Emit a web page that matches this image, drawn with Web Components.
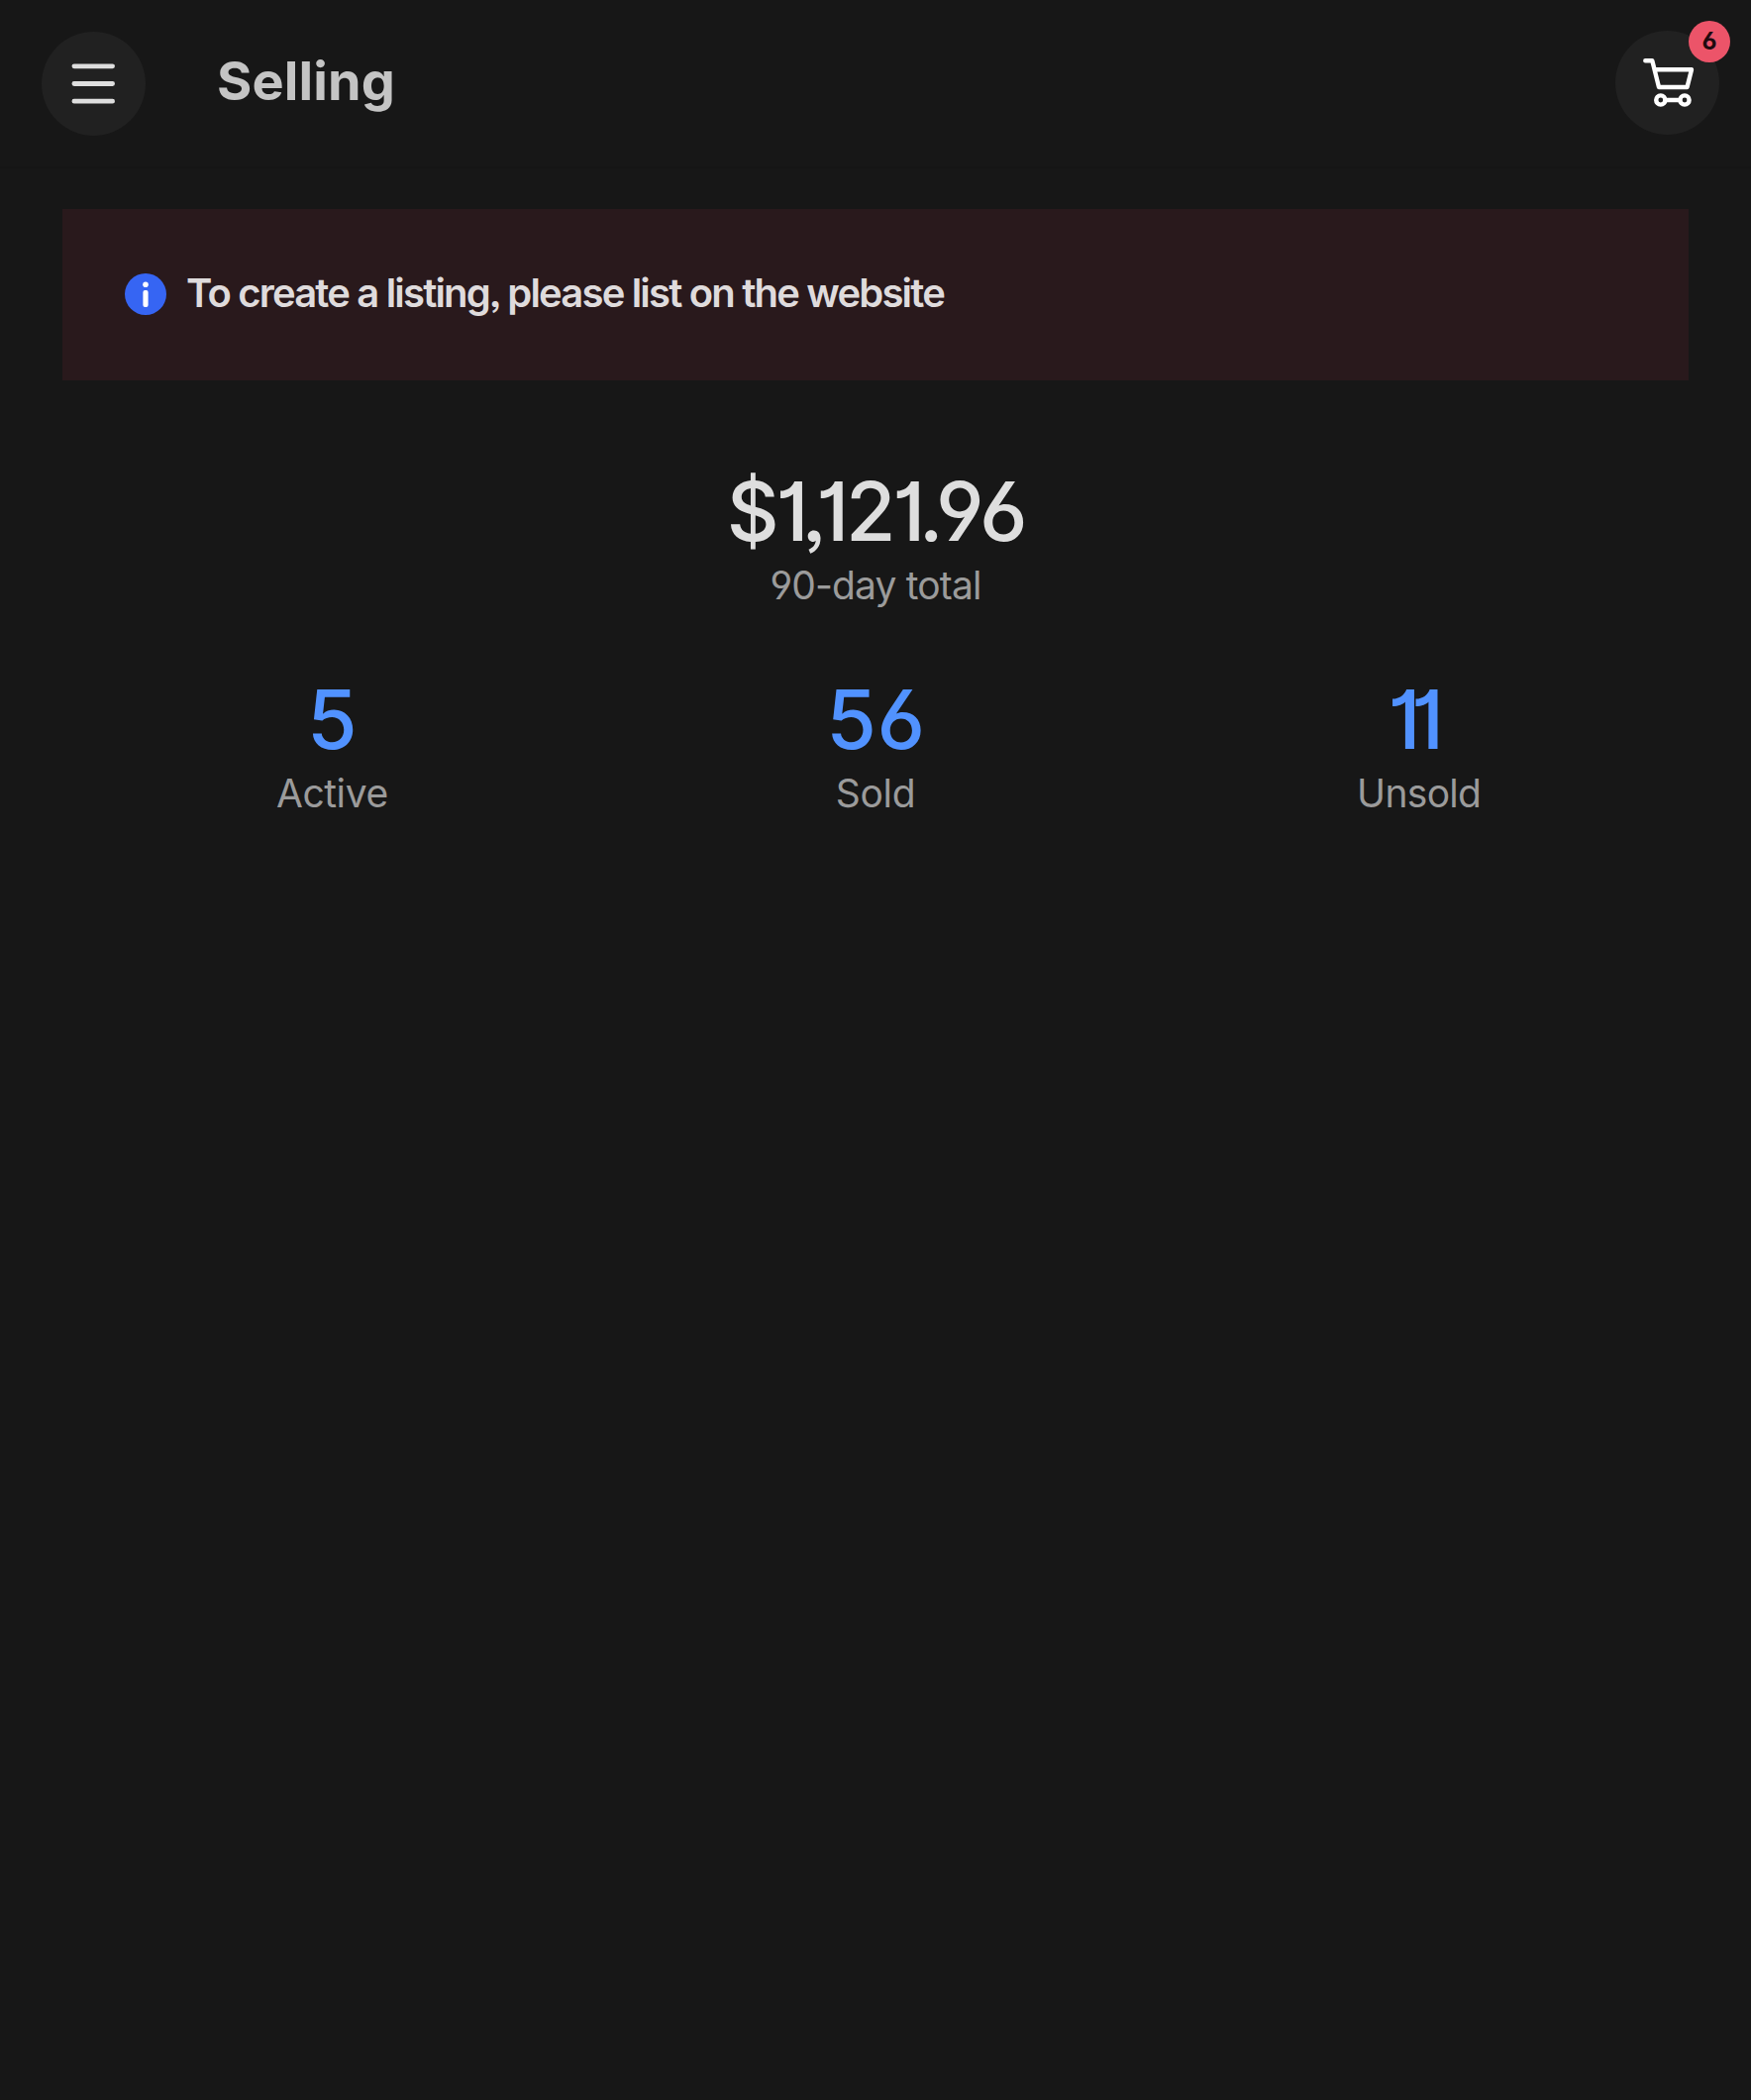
<!DOCTYPE html>
<html lang="en">
<head>
<meta charset="utf-8">
<title>Selling</title>
<style>
html,body{margin:0;background:#171717}
body{min-height:2120px;font-family:Inter,"Liberation Sans",sans-serif;font-feature-settings:"cv01","cv03","cv04","ss03";-webkit-font-smoothing:antialiased}
</style>
</head>
<body>
<selling-page></selling-page>
<script>
const define=(name,html)=>{
  const t=document.createElement('template');
  t.innerHTML=html;
  customElements.define(name,class extends HTMLElement{
    constructor(){super();this.attachShadow({mode:'open'}).append(t.content.cloneNode(true));}
  });
};

define('round-button',`
<style>
:host{display:block;position:relative;width:105px;height:105px;border-radius:50%;background:#212121}
</style><slot></slot><slot name="badge"></slot>`);

define('menu-icon',`
<style>:host,svg{display:block}</style>
<svg width="105" height="105" viewBox="0 0 105 105" fill="none" stroke="#dedede" stroke-width="4.8" stroke-linecap="round"><path d="M32.9 34.8H71.6M32.9 52.5H71.6M32.9 70.2H71.6"/></svg>`);

define('cart-icon',`
<style>:host,svg{display:block}</style>
<svg width="105" height="105" viewBox="0 0 105 105" fill="none" stroke="#fff" stroke-width="4.4" stroke-linecap="round" stroke-linejoin="round"><path d="M30.3 30.3H37.3L44 57H72.5L77 39.2H40.5"/><circle cx="45.8" cy="70" r="4.6"/><circle cx="70" cy="70" r="4.6"/><path d="M51 70H65"/></svg>`);

define('count-badge',`
<style>
:host{position:absolute;right:-11px;top:-10px;width:42px;height:42px;border-radius:50%;background:#ec5469;color:#200a0f;display:flex;align-items:center;justify-content:center;font-size:24.5px;line-height:42px;font-weight:700}
span{display:block;transform:translateY(-1px)}
</style><span><slot></slot></span>`);

define('app-header',`
<style>
:host{display:flex;align-items:flex-start;height:170px;box-sizing:border-box;padding:31px 32px 0 42px;border-bottom:2px solid #151515}
::slotted([slot=start]){margin-top:1px}
h1{margin:0 auto 0 72px;font-size:54px;line-height:101px;font-weight:700;letter-spacing:.1px;color:#c4c4c4;white-space:nowrap}
</style><slot name="start"></slot><h1><slot></slot></h1><slot name="end"></slot>`);

define('info-banner',`
<style>
:host{display:flex;align-items:center;gap:20px;box-sizing:border-box;height:173px;margin:41px 63px 0;padding:0 63px;background:#29191c}
svg{display:block;flex:none;margin-bottom:2px}
p{margin:0 0 4px;font-size:40px;line-height:52px;font-weight:600;letter-spacing:-1.82px;color:#dfdbdc;white-space:nowrap}
</style>
<svg width="42" height="42" viewBox="0 0 42 42"><circle cx="21" cy="21" r="21" fill="#3665f3"/><circle cx="21" cy="11.2" r="2.8" fill="#fff"/><rect x="18.4" y="17" width="5.2" height="17" rx="2" fill="#fff"/></svg>
<p><slot></slot></p>`);

define('stat-item',`
<style>
:host{display:flex;flex-direction:column;align-items:center;height:210px;white-space:nowrap}
.value{font-size:82px;line-height:89px;letter-spacing:var(--value-spacing,0);margin-right:var(--value-inset,0);color:var(--value-color,#dedede);font-weight:500}
.label{font-size:39px;line-height:60px;letter-spacing:var(--label-spacing,0);color:#9b9b9b}
</style>
<div class="value"><slot name="value"></slot></div><div class="label"><slot></slot></div>`);

define('selling-page',`
<style>
:host,main{display:block}
.totals{padding-top:88px}
.row{display:grid;grid-template-columns:repeat(3,1fr);padding:0 61px;--value-color:#5192ff}
.total{--value-spacing:-3.4px;--label-spacing:-.85px}
.active{--label-spacing:-.4px}
.sold{--value-spacing:.5px;--value-inset:-1px;--label-spacing:-.3px}
.unsold{--value-spacing:-10px;--value-inset:16px;--label-spacing:-.7px}
</style>
<app-header><round-button slot="start" role="button" aria-label="Menu"><menu-icon></menu-icon></round-button>Selling<round-button slot="end" role="button" aria-label="Cart"><cart-icon></cart-icon><count-badge slot="badge">6</count-badge></round-button></app-header>
<main>
<info-banner>To create a listing, please list on the website</info-banner>
<div class="totals">
<stat-item class="total"><span slot="value">$1,121.96</span>90-day total</stat-item>
<div class="row">
<stat-item class="active"><span slot="value">5</span>Active</stat-item>
<stat-item class="sold"><span slot="value">56</span>Sold</stat-item>
<stat-item class="unsold"><span slot="value">11</span>Unsold</stat-item>
</div></div>
</main>`);
</script>
</body>
</html>
